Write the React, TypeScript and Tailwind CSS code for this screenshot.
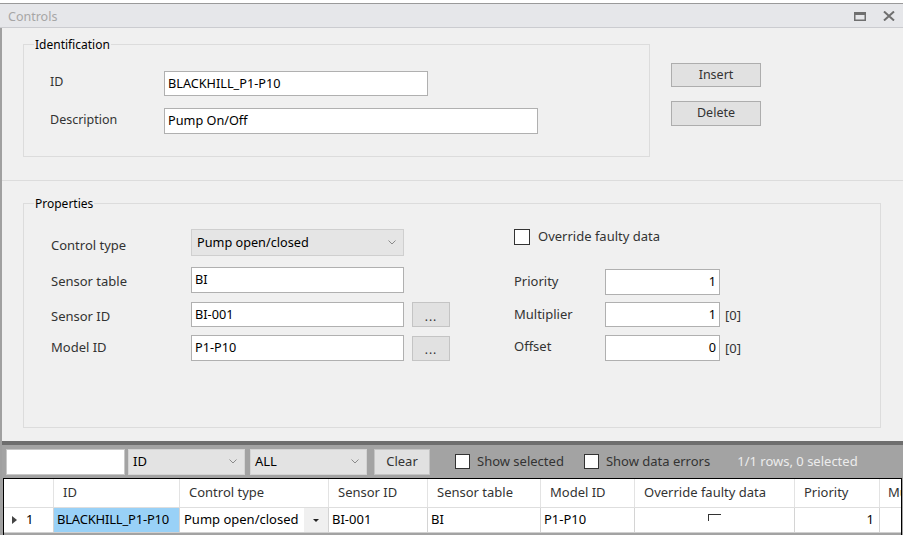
import React from "react";

const Chevron = ({ className = "" }: { className?: string }) => (
  <svg width="8" height="5" viewBox="0 0 8 5" className={className}>
    <path d="M0.5 0.5 L4 4 L7.5 0.5" fill="none" stroke="#8a8a8a" strokeWidth="1" />
  </svg>
);

const Input = ({ value, w, h, right }: { value: string; w: string; h?: string; right?: boolean }) => (
  <div
    className={`${w} ${h ?? "h-full"} bg-white border border-[#b0b0b0] flex items-center text-[12.7px] text-black ${
      right ? "justify-end pr-[3px]" : "pl-[3px]"
    }`}
  >
    {value}
  </div>
);

const DotsButton = () => (
  <div className="ml-[8px] w-[38px] h-[25px] bg-[#e1e1e1] border border-[#c4c4c4] flex items-center justify-center text-[12px] text-[#333] tracking-[1px] leading-none pt-[4px]">
    ...
  </div>
);

function Legend({ children }: { children: React.ReactNode }) {
  return (
    <span className="block w-fit -mt-[9px] ml-[10px] px-[1px] bg-[#f0f0f0] leading-[17px] text-[12px] text-black">
      {children}
    </span>
  );
}

const columns = [
  { label: "ID", w: "w-[126px]" },
  { label: "Control type", w: "w-[149px]" },
  { label: "Sensor ID", w: "w-[99px]" },
  { label: "Sensor table", w: "w-[113px]" },
  { label: "Model ID", w: "w-[94px]" },
  { label: "Override faulty data", w: "w-[160px]" },
  { label: "Priority", w: "w-[85px]" },
];

export default function App() {
  return (
    <div className="w-[903px] h-[535px] overflow-hidden bg-[#f0f0f0] flex flex-col font-['Noto_Sans',sans-serif]">
      {/* strip of the window behind */}
      <div className="h-[4px] shrink-0 bg-white border-b border-[#9a9a9a]" />

      {/* Title bar */}
      <div className="h-[24px] shrink-0 bg-[#e6e7ea] border-b border-[#cbccd0] flex items-center justify-between pl-[8px] pr-[8px]">
        <span className="text-[12.5px] text-[#a6a6a6] leading-none pt-[3px]">Controls</span>
        <div className="flex items-center gap-[17px] pt-[1px]">
          <svg width="12" height="9" viewBox="0 0 12 9">
            <rect x="0.75" y="1.5" width="10.5" height="6.75" fill="none" stroke="#6f6f6f" strokeWidth="1.5" />
            <rect x="0" y="0" width="12" height="3" fill="#6f6f6f" />
          </svg>
          <svg width="12" height="10" viewBox="0 0 12 10">
            <path d="M1 0.5 L11 9.5 M11 0.5 L1 9.5" stroke="#6f6f6f" strokeWidth="2" />
          </svg>
        </div>
      </div>

      <div className="flex-1 flex flex-col border-l-2 border-[#a0a0a0] min-h-0">
        {/* Identification */}
        <div className="h-[153px] shrink-0 border-b border-[#dcdcdc] flex items-start pl-[21px] pt-[16px]">
          <div className="w-[627px] h-[113px] border border-[#dcdcdc]">
            <Legend>Identification</Legend>
            <div className="pl-[26px] mt-[18px] text-[12.5px] text-[#333]">
              <div className="flex items-center h-[25px]">
                <span className="w-[114px] -mt-[2px]">ID</span>
                <Input value="BLACKHILL_P1-P10" w="w-[264px]" />
              </div>
              <div className="flex items-center h-[26px] mt-[12px]">
                <span className="w-[114px] -mt-[2px]">Description</span>
                <Input value="Pump On/Off" w="w-[374px]" />
              </div>
            </div>
          </div>
          <div className="ml-[21px] mt-[19px] flex flex-col">
            <div className="w-[90px] h-[24px] bg-[#e1e1e1] border border-[#adadad] flex items-center justify-center text-[12.5px] text-[#333]">
              Insert
            </div>
            <div className="w-[90px] h-[25px] mt-[14px] bg-[#e1e1e1] border border-[#adadad] flex items-center justify-center text-[12.5px] text-[#333]">
              Delete
            </div>
          </div>
        </div>

        {/* Properties */}
        <div className="h-[260px] shrink-0 pl-[21px] pt-[22px]">
          <div className="w-[858px] h-[225px] border border-[#dcdcdc]">
            <Legend>Properties</Legend>
            <div className="flex items-start pl-[27px] text-[13px] text-[#333]">
              <div className="w-[399px] mt-[17px] flex flex-col">
                <div className="flex items-center h-[27px]">
                  <span className="w-[140px] pt-[6px]">Control type</span>
                  <div className="w-[213px] h-full bg-[#e5e5e5] border border-[#cfcfcf] flex items-center justify-between pl-[5px] pr-[7px] text-[12.7px] text-black">
                    <span>Pump open/closed</span>
                    <Chevron />
                  </div>
                </div>
                <div className="flex items-center h-[26px] mt-[11px]">
                  <span className="w-[140px] pt-[4px]">Sensor table</span>
                  <Input value="BI" w="w-[213px]" />
                </div>
                <div className="flex items-center h-[25px] mt-[9px]">
                  <span className="w-[140px] pt-[5px]">Sensor ID</span>
                  <Input value="BI-001" w="w-[213px]" />
                  <DotsButton />
                </div>
                <div className="flex items-center h-[26px] mt-[8px]">
                  <span className="w-[140px] -mt-[1px]">Model ID</span>
                  <Input value="P1-P10" w="w-[213px]" />
                  <DotsButton />
                </div>
              </div>

              <div className="ml-[64px] mt-[16px] flex flex-col">
                <div className="flex items-center h-[17px]">
                  <div className="w-[16px] h-[16px] bg-white border border-[#333]" />
                  <span className="ml-[8px]">Override faulty data</span>
                </div>
                <div className="flex items-center h-[26px] mt-[24px]">
                  <span className="w-[91px]">Priority</span>
                  <Input value="1" w="w-[115px]" right />
                </div>
                <div className="flex items-center h-[25px] mt-[7px]">
                  <span className="w-[91px]">Multiplier</span>
                  <Input value="1" w="w-[115px]" right />
                  <span className="ml-[5px] pt-[2px]">[0]</span>
                </div>
                <div className="flex items-center h-[26px] mt-[8px]">
                  <span className="w-[91px] -mt-[2px]">Offset</span>
                  <Input value="0" w="w-[115px]" right />
                  <span className="ml-[5px] pt-[2px]">[0]</span>
                </div>
              </div>
            </div>
          </div>
        </div>

        {/* Data table panel */}
        <div className="flex-1 flex flex-col border-t-4 border-[#6e6e6e] bg-[#a3a3a3] min-h-0">
          <div className="h-[33px] shrink-0 flex items-center pl-[4px] text-[13px]">
            <div className="w-[119px] h-[26px] bg-white border border-[#c8c8c8]" />
            <div className="ml-[3px] w-[117px] h-[26px] bg-[#e3e3e3] border border-[#d4d4d4] flex items-center justify-between pl-[4px] pr-[7px] text-black">
              <span>ID</span>
              <Chevron />
            </div>
            <div className="ml-[5px] w-[117px] h-[26px] bg-[#e3e3e3] border border-[#d4d4d4] flex items-center justify-between pl-[4px] pr-[7px] text-black">
              <span>ALL</span>
              <Chevron />
            </div>
            <div className="ml-[7px] w-[56px] h-[26px] bg-[#e1e1e1] border border-[#c4c4c4] flex items-center justify-center text-[#333]">
              Clear
            </div>
            <div className="ml-[25px] w-[15px] h-[15px] bg-white border border-[#333]" />
            <span className="ml-[7px] text-[#333]">Show selected</span>
            <div className="ml-[20px] w-[15px] h-[15px] bg-white border border-[#333]" />
            <span className="ml-[7px] text-[#333]">Show data errors</span>
            <span className="ml-[27px] text-[#ececec]">1/1 rows, 0 selected</span>
          </div>

          <div className="ml-[1px] w-[899px] flex-1 border-t border-l border-r border-black overflow-hidden text-[13px]">
            <div className="flex h-[29px] bg-white border-b border-[#dedede]">
              <div className="w-[50px] shrink-0 border-r border-[#e3e3e3]" />
              {columns.map((c) => (
                <div key={c.label} className={`${c.w} shrink-0 border-r border-[#e3e3e3] flex items-center pl-[9px] text-[#333]`}>
                  {c.label}
                </div>
              ))}
              <div className="flex-1 flex items-center pl-[8px] text-[#333] whitespace-nowrap">Mu</div>
            </div>
            <div className="flex h-[25px] bg-white border-b border-[#d0d0d0] text-black">
              <div className="w-[50px] shrink-0 border-r border-[#d4d4d4] flex items-center pl-[8px]">
                <svg width="5" height="8" viewBox="0 0 5 8">
                  <path d="M0 0 L5 4 L0 8 Z" fill="#444" />
                </svg>
                <span className="ml-[9px]">1</span>
              </div>
              <div className="w-[126px] shrink-0 bg-[#99d1f7] border-r border-[#d4d4d4] flex items-center pl-[3px] whitespace-nowrap tracking-[-0.2px]">
                BLACKHILL_P1-P10
              </div>
              <div className="w-[149px] shrink-0 border-r border-[#d4d4d4] flex items-center justify-between pl-[4px]">
                <span className="whitespace-nowrap">Pump open/closed</span>
                <div className="w-[24px] h-full bg-[#f0f0f0] flex items-center justify-center">
                  <svg width="6" height="3" viewBox="0 0 6 3">
                    <path d="M0 0 L6 0 L3 3 Z" fill="#222" />
                  </svg>
                </div>
              </div>
              <div className="w-[99px] shrink-0 border-r border-[#d4d4d4] flex items-center pl-[3px]">BI-001</div>
              <div className="w-[113px] shrink-0 border-r border-[#d4d4d4] flex items-center pl-[3px]">BI</div>
              <div className="w-[94px] shrink-0 border-r border-[#d4d4d4] flex items-center pl-[3px]">P1-P10</div>
              <div className="w-[160px] shrink-0 border-r border-[#d4d4d4] flex justify-center pt-[6px]">
                <div className="w-[13px] h-[7px] border-t border-l border-[#333]" />
              </div>
              <div className="w-[85px] shrink-0 border-r border-[#d4d4d4] flex items-center justify-end pr-[5px]">1</div>
              <div className="flex-1" />
            </div>
          </div>
        </div>
      </div>
    </div>
  );
}
